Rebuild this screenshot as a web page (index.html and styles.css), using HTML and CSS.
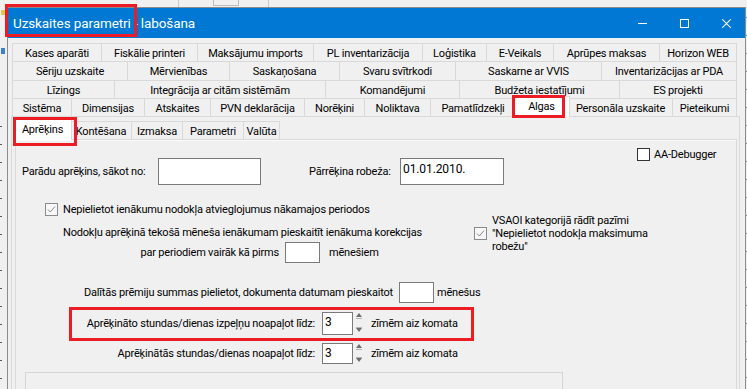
FILE: index.html
```html
<!DOCTYPE html>
<html lang="lv">
<head>
<meta charset="utf-8">
<title>Uzskaites parametri - labošana</title>
<link rel="stylesheet" href="styles.css">
</head>
<body>
<div class="screen">
  <div class="bg-left"></div>
  <div class="middle">
    <div class="bg-top"><span class="tick tick-a"></span><span class="tbox"></span><span class="tick tick-b"></span></div>
    <div class="window">
      <div class="titlebar">
        <span class="title">Uzskaites parametri - labošana</span>
        <div class="controls">
          <svg width="9" height="10" viewBox="0 0 9 10"><rect x="0" y="5" width="9" height="1" fill="#fff"/></svg>
          <svg width="9" height="10" viewBox="0 0 9 10"><rect x="0.5" y="1.5" width="8" height="8" fill="none" stroke="#fff" stroke-width="1"/></svg>
          <svg width="9" height="10" viewBox="0 0 9 10"><path d="M0.3 1.3 L8.7 9.7 M8.7 1.3 L0.3 9.7" stroke="#fff" stroke-width="1.1" fill="none"/></svg>
        </div>
      </div>
      <div class="client">
        <div class="tabctl main-ctl">
          <div class="tabrow r1">
            <div class="tab">Kases aparāti</div>
            <div class="tab">Fiskālie printeri</div>
            <div class="tab">Maksājumu imports</div>
            <div class="tab">PL inventarizācija</div>
            <div class="tab">Loģistika</div>
            <div class="tab">E-Veikals</div>
            <div class="tab">Aprūpes maksas</div>
            <div class="tab">Horizon WEB</div>
          </div>
          <div class="tabrow r2">
            <div class="tab">Sēriju uzskaite</div>
            <div class="tab">Mērvienības</div>
            <div class="tab">Saskaņošana</div>
            <div class="tab">Svaru svītrkodi</div>
            <div class="tab">Saskarne ar VVIS</div>
            <div class="tab">Inventarizācijas ar PDA</div>
          </div>
          <div class="tabrow r3">
            <div class="tab">Līzings</div>
            <div class="tab">Integrācija ar citām sistēmām</div>
            <div class="tab">Komandējumi</div>
            <div class="tab">Budžeta iestatījumi</div>
            <div class="tab">ES projekti</div>
          </div>
          <div class="tabrow r4">
            <div class="tab">Sistēma</div>
            <div class="tab">Dimensijas</div>
            <div class="tab">Atskaites</div>
            <div class="tab">PVN deklarācija</div>
            <div class="tab">Norēķini</div>
            <div class="tab">Noliktava</div>
            <div class="tab">Pamatlīdzekļi</div>
            <div class="tab active">Algas</div>
            <div class="tab">Personāla uzskaite</div>
            <div class="tab">Pieteikumi</div>
          </div>
          <div class="page main-page">
            <div class="tabctl sub-ctl">
              <div class="tabrow s1">
                <div class="tab active">Aprēķins</div>
                <div class="tab">Kontēšana</div>
                <div class="tab">Izmaksa</div>
                <div class="tab">Parametri</div>
                <div class="tab">Valūta</div>
              </div>
              <div class="page sub-page">
                <div class="panel">
                  <div class="row row-a">
                    <span class="lbl lbl-parad">Parādu aprēķins, sākot no:</span>
                    <span class="inp inp-parad"></span>
                    <span class="lbl lbl-parr">Pārrēķina robeža:</span>
                    <span class="inp inp-date">01.01.2010.</span>
                    <span class="chk chk-aa"></span>
                    <span class="lbl lbl-aa">AA-Debugger</span>
                  </div>
                  <div class="row row-b">
                    <span class="chk chk-on"><svg width="11" height="11" viewBox="0 0 11 11"><path d="M2 5.5 L4.3 8 L9 2.5" fill="none" stroke="#8a8a8a" stroke-width="1"/></svg></span>
                    <span class="lbl">Nepielietot ienākumu nodokļa atvieglojumus nākamajos periodos</span>
                  </div>
                  <div class="row row-c">
                    <div class="col-left">
                      <div class="line-nod">Nodokļu aprēķinā tekošā mēneša ienākumam pieskaitīt ienākuma korekcijas</div>
                      <div class="sub-row">
                        <span class="lbl lbl-par">par periodiem vairāk kā pirms</span>
                        <span class="inp inp-small"></span>
                        <span class="lbl lbl-men">mēnešiem</span>
                      </div>
                    </div>
                    <div class="col-right">
                      <span class="chk chk-on chk-vsaoi"><svg width="11" height="11" viewBox="0 0 11 11"><path d="M2 5.5 L4.3 8 L9 2.5" fill="none" stroke="#8a8a8a" stroke-width="1"/></svg></span>
                      <span class="vsaoi-text">VSAOI kategorijā rādīt pazīmi<br>"Nepielietot nodokļa maksimuma<br>robežu"</span>
                    </div>
                  </div>
                  <div class="row row-e">
                    <span class="lbl lbl-dal">Dalītās prēmiju summas pielietot, dokumenta datumam pieskaitot</span>
                    <span class="inp inp-small"></span>
                    <span class="lbl lbl-mens">mēnešus</span>
                  </div>
                  <div class="row row-f">
                    <span class="lbl lbl-right">Aprēķināto stundas/dienas izpeļņu noapaļot līdz:</span>
                    <span class="inp inp-spin">3</span>
                    <svg class="spin" width="8" height="23" viewBox="0 0 8 23"><path d="M4 1 L7 5 L1 5 Z" fill="#6d6d6d"/><rect x="1" y="6" width="6" height="1" fill="#b5b5b5"/><path d="M1 16 L7 16 L4 20 Z" fill="#6d6d6d"/><rect x="1" y="15" width="6" height="1" fill="#b5b5b5"/></svg>
                    <span class="lbl lbl-zim">zīmēm aiz komata</span>
                  </div>
                  <div class="row row-g">
                    <span class="lbl lbl-right">Aprēķinātās stundas/dienas noapaļot līdz:</span>
                    <span class="inp inp-spin inp-spin2">3</span>
                    <svg class="spin" width="8" height="21" viewBox="0 0 8 21"><path d="M4 1 L7 5 L1 5 Z" fill="#6d6d6d"/><rect x="1" y="6" width="6" height="1" fill="#b5b5b5"/><path d="M1 15 L7 15 L4 19 Z" fill="#6d6d6d"/><rect x="1" y="14" width="6" height="1" fill="#b5b5b5"/></svg>
                    <span class="lbl lbl-zim">zīmēm aiz komata</span>
                  </div>
                  <div class="groupbox"></div>
                </div>
              </div>
            </div>
          </div>
        </div>
      </div>
    </div>
  </div>
  <div class="bg-right"></div>

  <div class="mark mark-title"></div>
  <div class="mark mark-algas"></div>
  <div class="mark mark-aprekins"></div>
  <div class="mark mark-round"></div>
</div>
</body>
</html>
```

FILE: styles.css
```css
* { box-sizing: border-box; }

body {
  margin: 0;
  background: #f0f0f0;
  font-family: Roboto, "Liberation Sans", sans-serif;
  font-size: 11px;
  letter-spacing: -0.2px;
  color: #000;
}

.screen {
  position: relative;
  width: 747px;
  height: 389px;
  overflow: hidden;
  display: flex;
  background: #f0f0f0;
}

/* background application around the window */
.bg-left {
  width: 7px;
  flex: none;
  background:
    repeating-linear-gradient(to bottom, transparent 0 16px, #5a5a5a 16px 17px, transparent 17px 18px) 0 110px / 2px 290px no-repeat,
    linear-gradient(#e8c450, #e8c450) 1px 10px / 4px 5px no-repeat,
    linear-gradient(#3f7fd0, #3f7fd0) 1px 48px / 4px 6px no-repeat,
    #f0f0f0;
}

.middle {
  width: 739px;
  flex: none;
  display: flex;
  flex-direction: column;
}

.bg-top {
  height: 7px;
  flex: none;
  display: flex;
}
.tick { width: 1px; height: 7px; background: #c9c9c9; }
.tick-a { margin-left: 171px; }
.tbox { margin-left: 34px; width: 26px; height: 6px; border: 1px solid #bdbdbd; border-top: none; }
.tick-b { margin-left: 29px; }

.bg-right {
  width: 1px;
  flex: none;
  background: repeating-linear-gradient(to bottom, #f0f0f0 0 17px, #8a8a8a 17px 18px);
}

/* window */
.window {
  flex: 1;
  display: flex;
  flex-direction: column;
  border: 1px solid #8c8c8c;
  border-bottom: none;
  background: #f0f0f0;
}

.titlebar {
  height: 30px;
  flex: none;
  display: flex;
  align-items: center;
  background: #0078d4;
  color: #fff;
}
.title {
  padding-left: 5px;
  font-size: 13.5px;
  letter-spacing: -0.1px;
}
.controls {
  margin-left: auto;
  display: flex;
  align-items: center;
  gap: 33px;
  padding-right: 14px;
}
.controls svg { display: block; }

.client {
  flex: 1;
  padding: 5px 0 0 3px;
}

/* tab controls */
.tabctl { display: flex; flex-direction: column; }
.main-ctl { width: 729px; height: 400px; }
.sub-ctl { width: 722px; flex: 1; }

.tabrow { display: grid; height: 18px; }
.r1, .r2, .r3, .r4 { margin-left: 1px; width: 725px; }
.r1 { grid-template-columns: 89px 96px 116px 109px 64px 67px 106px 78px; }
.r2 { grid-template-columns: 115px 102px 110px 116px 146px 136px; height: 19px; }
.r3 { grid-template-columns: 102px 211px 134px 160px 118px; }
.r4 { grid-template-columns: 59px 73px 66px 94px 60px 66px 85px 53px 104px 65px; }
.s1 { grid-template-columns: 55px 61px 51px 61px 37px; width: 265px; }

.tab {
  display: flex;
  align-items: center;
  justify-content: center;
  white-space: nowrap;
  border-top: 1px solid #d9d9d9;
  border-left: 1px solid #d9d9d9;
  background: #f0f0f0;
  padding-top: 1px;
}
.tab:last-child { border-right: 1px solid #d9d9d9; }
.tab.active {
  position: relative;
  z-index: 2;
  margin: -2px -2px -1px -2px;
  background: #fff;
  border-right: 1px solid #d9d9d9;
  padding-top: 0;
  padding-bottom: 2px;
}

.page {
  flex: 1;
  border: 1px solid #d9d9d9;
  border-bottom: none;
}
.main-page {
  display: flex;
  padding: 4px 2px 0 3px;
}
.sub-page { display: flex; flex-direction: column; }

.panel {
  flex: 1;
  border-top: 1px solid #fbfbfb;
  display: flex;
  flex-direction: column;
}

/* form controls */
.row { display: flex; flex: none; }
.lbl { white-space: nowrap; }
.inp {
  flex: none;
  display: block;
  background: #fff;
  border: 1px solid #7a7a7a;
}
.chk {
  flex: none;
  width: 13px;
  height: 13px;
  display: flex;
  align-items: center;
  justify-content: center;
  background: #fff;
  border: 1px solid #333;
}
.chk-on { border-color: #8a8a8a; background: #f7f7f7; }
.chk svg { display: block; }

.row-a { margin-top: 7px; align-items: flex-start; }
.lbl-parad {
  margin: 10px 0 0 6px;
  width: 136px;
  line-height: 27px;
}
.inp-parad { margin-top: 10px; width: 103px; height: 27px; }
.lbl-parr {
  margin-top: 10px;
  width: 139px;
  padding-left: 48px;
  line-height: 27px;
}
.inp-date {
  margin-top: 10px;
  width: 104px;
  height: 27px;
  padding: 2px 0 0 2px;
  font-size: 12px;
  line-height: 17px;
  letter-spacing: -0.1px;
}
.chk-aa { margin-left: 133px; }
.lbl-aa { margin-left: 4px; line-height: 13px; }

.row-b { margin: 18px 0 0 29px; align-items: center; }
.row-b .lbl { margin-left: 5px; line-height: 13px; }

.row-c { align-items: flex-start; }
.col-left { margin-left: 47px; width: 411px; }
.line-nod { padding-top: 10px; line-height: 13px; white-space: nowrap; }
.sub-row { display: flex; align-items: center; margin-top: 3px; }
.lbl-par { width: 216px; text-align: right; }
.inp-small { width: 35px; height: 21px; }
.sub-row .inp-small { margin-left: 6px; }
.lbl-men { margin-left: 9px; }
.col-right { display: flex; align-items: flex-start; }
.chk-vsaoi { margin-top: 11px; }
.vsaoi-text { margin: -2px 0 0 5px; line-height: 13px; white-space: nowrap; }

.row-e { margin: 19px 0 0 68px; align-items: center; }
.lbl-dal { width: 315px; }
.lbl-mens { margin-left: 3px; }

.row-f { margin-top: 9px; align-items: center; }
.row-g { margin-top: 8px; align-items: center; }
.lbl-right { width: 306px; text-align: right; padding-right: 7px; }
.inp-spin {
  width: 31px;
  height: 23px;
  padding: 2px 0 0 2px;
  font-size: 12px;
  line-height: 15px;
  letter-spacing: 0;
}
.inp-spin2 { height: 21px; padding-top: 2px; }
.spin { display: block; flex: none; margin-left: 2px; }
.lbl-zim { margin-left: 8px; }

.groupbox {
  flex: none;
  margin: 8px 0 0 9px;
  width: 538px;
  height: 40px;
  border: 1px solid #d5d5d5;
}

/* red annotation frames drawn over the screenshot */
.mark {
  position: absolute;
  border: 3px solid #ed1c24;
  z-index: 10;
}
.mark-title { left: 5px; top: 4px; width: 132px; height: 33px; }
.mark-algas { left: 512px; top: 95px; width: 53px; height: 23px; }
.mark-aprekins { left: 13px; top: 117px; width: 64px; height: 29px; }
.mark-round { left: 69px; top: 307px; width: 405px; height: 34px; }
```
